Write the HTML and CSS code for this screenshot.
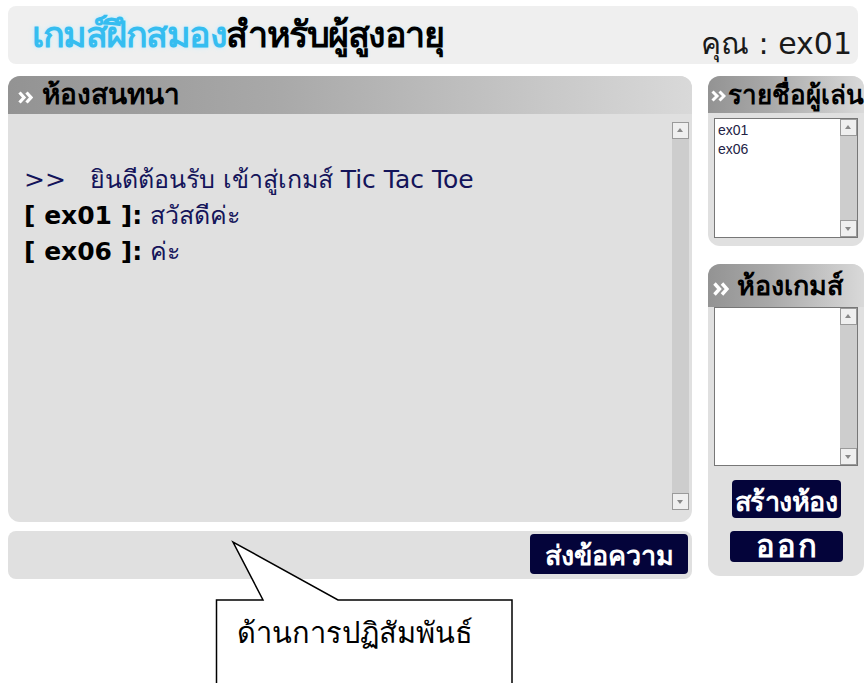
FILE: index.html
```html
<!DOCTYPE html>
<html lang="th">
<head>
<meta charset="utf-8">
<title>เกมส์ฝึกสมองสำหรับผู้สูงอายุ</title>
<link rel="stylesheet" href="styles.css">
</head>
<body>
<div class="page">
  <header class="topbar">
    <h1 class="logo"><span class="logo-cyan">เกมส์ฝึกสมอง</span><span class="logo-dark">สำหรับผู้สูงอายุ</span></h1>
    <div class="user">คุณ : ex01</div>
  </header>

  <div class="main">
    <section class="chat-col">
      <div class="panel chat">
        <div class="panel-head chat-head">
          <svg class="chev" width="15" height="13" viewBox="0 0 15 13"><path d="M1.5 1.5 L6 6.5 L1.5 11.5 M8.5 1.5 L13 6.5 L8.5 11.5" fill="none" stroke="#fff" stroke-width="3.2"/></svg>
          <span>ห้องสนทนา</span>
        </div>
        <div class="chat-body">
          <div class="messages">
            <p class="msg system">&gt;&gt;&nbsp;&nbsp;&nbsp;ยินดีต้อนรับ เข้าสู่เกมส์ Tic Tac Toe</p>
            <p class="msg"><b>[ ex01 ]:</b> สวัสดีค่ะ</p>
            <p class="msg"><b>[ ex06 ]:</b> ค่ะ</p>
          </div>
          <div class="scrollbar tall">
            <span class="sb-btn up"></span>
            <span class="sb-track"></span>
            <span class="sb-btn down"></span>
          </div>
        </div>
      </div>
      <div class="sendbar">
        <button class="btn send">ส่งข้อความ</button>
      </div>
    </section>

    <aside class="side">
      <div class="panel players">
        <div class="panel-head side-head">
          <svg class="chev" width="15" height="12" viewBox="0 0 15 12"><path d="M1.5 1.5 L6 6 L1.5 10.5 M8.5 1.5 L13 6 L8.5 10.5" fill="none" stroke="#fff" stroke-width="3"/></svg>
          <span>รายชื่อผู้เล่น</span>
        </div>
        <div class="listbox short">
          <ul class="items">
            <li>ex01</li>
            <li>ex06</li>
          </ul>
          <div class="scrollbar">
            <span class="sb-btn up"></span>
            <span class="sb-track"></span>
            <span class="sb-btn down"></span>
          </div>
        </div>
      </div>

      <div class="panel rooms">
        <div class="panel-head rooms-head">
          <svg class="chev" width="16" height="14" viewBox="0 0 16 14"><path d="M1.5 1.5 L6.5 7 L1.5 12.5 M9 1.5 L14 7 L9 12.5" fill="none" stroke="#fff" stroke-width="3.4"/></svg>
          <span>ห้องเกมส์</span>
        </div>
        <div class="listbox tallbox">
          <ul class="items"></ul>
          <div class="scrollbar">
            <span class="sb-btn up"></span>
            <span class="sb-track"></span>
            <span class="sb-btn down"></span>
          </div>
        </div>
        <div class="room-actions">
          <button class="btn create">สร้างห้อง</button>
          <button class="btn leave">ออก</button>
        </div>
      </div>
    </aside>
  </div>

  <div class="callout">
    <svg class="callout-shape" width="300" height="150" viewBox="0 0 300 150">
      <path d="M1.5 60 L48 60 L18 2 L123 60 L297 60 L297 160 L1.5 160 Z" fill="#fff" stroke="#000" stroke-width="1.5" stroke-linejoin="miter"/>
    </svg>
    <span class="callout-text">ด้านการปฏิสัมพันธ์</span>
  </div>
</div>
</body>
</html>
```

FILE: styles.css
```css
html, body {
  margin: 0;
  padding: 0;
  overflow: hidden;
  background: #fff;
}

body {
  font-family: "DejaVu Sans", sans-serif;
  color: #111;
}

.page {
  position: relative;
  width: 864px;
  height: 683px;
  padding: 6px 0 0 8px;
  box-sizing: border-box;
}

/* ---- top bar ---- */
.topbar {
  width: 850px;
  height: 58px;
  background: #efefef;
  border-radius: 8px;
  display: flex;
  align-items: flex-end;
  justify-content: space-between;
  box-sizing: border-box;
  padding: 0 6px 2px 24px;
}

.logo {
  margin: 0 0 9px 0;
  font-size: 36px;
  font-weight: bold;
  letter-spacing: -1.5px;
  line-height: 1;
  white-space: nowrap;
}

.logo-cyan {
  color: #35bdf0;
  text-shadow: 0 0 3px #bfe9fb, 0 0 6px #d6f1fc;
}

.logo-dark {
  color: #000;
  text-shadow: 0 0 3px #c9ecfb;
}

.user {
  font-size: 30px;
  color: #1a1a1a;
  line-height: 1.2;
}

/* ---- main area ---- */
.main {
  display: flex;
  gap: 16px;
  margin-top: 12px;
}

.chat-col {
  width: 684px;
  display: flex;
  flex-direction: column;
  gap: 9px;
}

.panel {
  background: #e0e0e0;
  border-radius: 12px;
  overflow: hidden;
}

.panel-head {
  background: linear-gradient(to right, #939393, #a9a9a9 40%, #d9d9d9);
  font-weight: bold;
  color: #000;
  white-space: nowrap;
  display: flex;
  align-items: center;
}

.chev {
  flex: none;
}

.chat {
  height: 446px;
  display: flex;
  flex-direction: column;
}

.chat-head {
  height: 38px;
  line-height: 44px;
  font-size: 28px;
  padding-left: 10px;
  gap: 9px;
}

.chat-head .chev {
  margin-top: 4px;
}

.chat-body {
  flex: 1;
  display: flex;
  justify-content: space-between;
  padding: 8px 3px 12px 16px;
}

.messages {
  padding-top: 40px;
}

.msg {
  margin: 0;
  font-size: 25px;
  line-height: 36px;
  color: #14145a;
  white-space: nowrap;
}

.msg b {
  color: #000;
}

/* ---- scrollbars ---- */
.scrollbar {
  width: 17px;
  display: flex;
  flex-direction: column;
  background: #cdcdcd;
}

.sb-track {
  flex: 1;
}

.sb-btn {
  height: 17px;
  box-sizing: border-box;
  background: #efefef;
  border: 1px solid #9a9a9a;
  position: relative;
}

.sb-btn::after {
  content: "";
  position: absolute;
  left: 4px;
  width: 0;
  height: 0;
  border-left: 3.5px solid transparent;
  border-right: 3.5px solid transparent;
}

.sb-btn.up::after {
  top: 5px;
  border-bottom: 4px solid #888;
}

.sb-btn.down::after {
  top: 6px;
  border-top: 4px solid #888;
}

/* ---- send bar ---- */
.sendbar {
  height: 48px;
  background: #e0e0e0;
  border-radius: 8px;
  display: flex;
  justify-content: flex-end;
  align-items: flex-start;
  padding: 3px 4px 0 0;
  box-sizing: border-box;
}

.btn {
  background: #04043a;
  color: #fff;
  border: 0;
  border-radius: 4px;
  font-family: "DejaVu Sans", sans-serif;
  font-weight: bold;
  padding: 0;
  cursor: pointer;
  white-space: nowrap;
}

.send {
  width: 158px;
  height: 40px;
  font-size: 27px;
}

/* ---- side column ---- */
.side {
  width: 156px;
  display: flex;
  flex-direction: column;
  gap: 18px;
}

.players {
  height: 170px;
}

.side-head {
  height: 37px;
  line-height: 40px;
  font-size: 26px;
  padding-left: 3px;
  gap: 2px;
}

.side-head .chev {
  margin-top: 2px;
}

.rooms {
  height: 312px;
}

.rooms-head {
  height: 43px;
  line-height: 52px;
  font-size: 27px;
  padding-left: 5px;
  gap: 8px;
}

.rooms-head .chev {
  margin-top: 6px;
}

.listbox {
  margin: 0 6px;
  background: #fff;
  border: 1px solid #777;
  display: flex;
  justify-content: space-between;
  box-sizing: border-box;
}

.listbox.short {
  height: 120px;
  margin-top: 5px;
}

.listbox.tallbox {
  height: 159px;
}

.items {
  list-style: none;
  margin: 0;
  padding: 2px 3px;
  font-family: "Liberation Sans", Arial, sans-serif;
  font-size: 14px;
  line-height: 19px;
  color: #222244;
}

.room-actions {
  display: flex;
  flex-direction: column;
  align-items: center;
  gap: 13px;
  margin-top: 14px;
}

.create {
  width: 109px;
  height: 38px;
  font-size: 27px;
  letter-spacing: -0.5px;
}

.leave {
  width: 113px;
  height: 31px;
  font-size: 31px;
  letter-spacing: 2px;
  text-indent: 2px;
  line-height: 31px;
}

/* ---- annotation callout ---- */
.callout {
  position: absolute;
  left: 215px;
  top: 540px;
  width: 300px;
  height: 150px;
}

.callout-shape {
  position: absolute;
  left: 0;
  top: 0;
}

.callout-text {
  position: absolute;
  left: 22px;
  top: 78px;
  font-size: 29px;
  line-height: 1.1;
  color: #000;
  white-space: nowrap;
}
```
